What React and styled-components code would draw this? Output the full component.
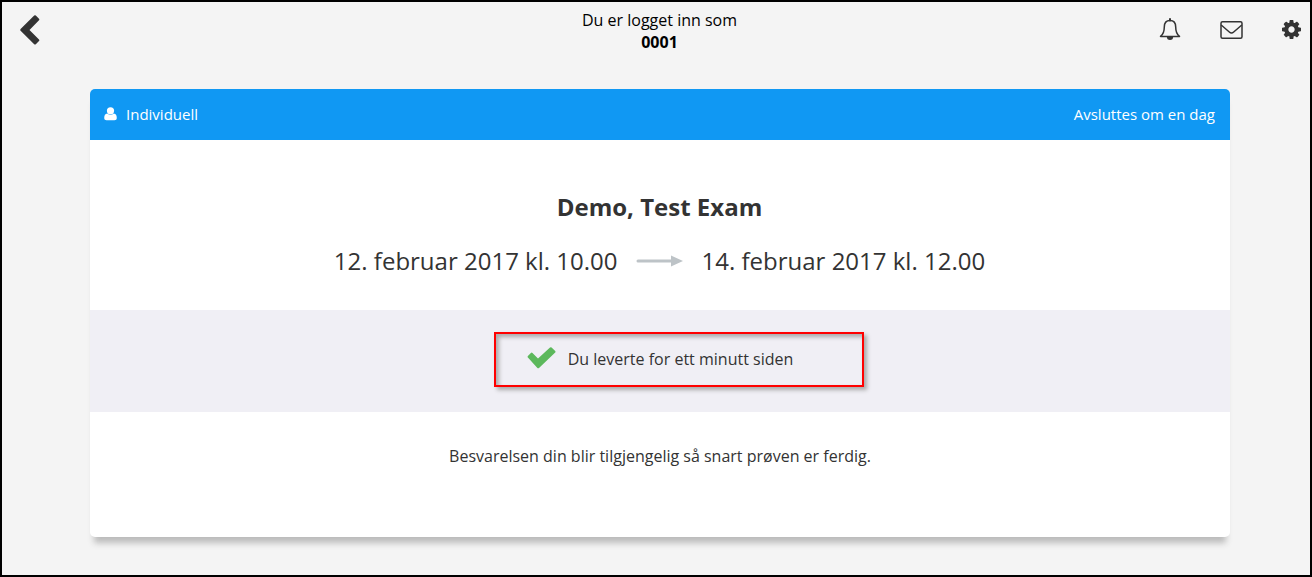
import styled, { createGlobalStyle } from "styled-components";

export default function App() {
    return (
        <Page>
            <GlobalStyle />
            <TopBar>
                <IconButton aria-label="Tilbake">
                    <BackIcon />
                </IconButton>
                <LoginInfo>
                    Du er logget inn som
                    <strong>0001</strong>
                </LoginInfo>
                <Actions>
                    <IconButton aria-label="Varsler">
                        <BellIcon />
                    </IconButton>
                    <IconButton aria-label="Meldinger">
                        <MailIcon />
                    </IconButton>
                    <IconButton aria-label="Innstillinger">
                        <CogIcon />
                    </IconButton>
                </Actions>
            </TopBar>
            <Card>
                <CardHeader>
                    <ExamType>
                        <UserIcon />
                        Individuell
                    </ExamType>
                    <span>Avsluttes om en dag</span>
                </CardHeader>
                <ExamInfo>
                    <Title>Demo, Test Exam</Title>
                    <Period>
                        <time dateTime="2017-02-12T10:00">12. februar 2017 kl. 10.00</time>
                        <ArrowIcon />
                        <time dateTime="2017-02-14T12:00">14. februar 2017 kl. 12.00</time>
                    </Period>
                </ExamInfo>
                <StatusBand>
                    <Status>
                        <CheckIcon />
                        <span>Du leverte for ett minutt siden</span>
                        <Highlight />
                    </Status>
                </StatusBand>
                <Message>Besvarelsen din blir tilgjengelig så snart prøven er ferdig.</Message>
            </Card>
        </Page>
    );
}

function BackIcon() {
    return (
        <svg width="20" height="30" viewBox="0 0 20 30" aria-hidden="true">
            <path
                d="M14.2 .5Q15 -.2 15.8 .5L19 3.7Q19.7 4.5 19 5.3L9.5 14.9L19 24.5Q19.7 25.3 19 26.1L15.8 29.2Q15 29.9 14.2 29.2L.6 15.7Q-.1 14.9 .6 14.1Z"
                fill="#333"
            />
        </svg>
    );
}

function BellIcon() {
    return (
        <svg width="22" height="24" viewBox="0 0 22 24" aria-hidden="true">
            <path
                d="M11 2.500C7 2.500 5.300 5.500 5.300 9C5.300 14 4 16.500 1.500 18.400H20.500C18 16.500 16.700 14 16.700 9C16.700 5.500 15 2.500 11 2.500Z"
                fill="none"
                stroke="#333"
                strokeWidth="1.5"
                strokeLinejoin="round"
            />
            <path d="M11 1V2.500" stroke="#333" strokeWidth="2" strokeLinecap="round" />
            <path d="M7.800 18.500H14.200A3.200 3.600 0 0 1 7.800 18.500Z" fill="#333" />
        </svg>
    );
}

function MailIcon() {
    return (
        <svg width="23" height="20" viewBox="0 0 23 20" aria-hidden="true">
            <g fill="none" stroke="#333" strokeWidth="1.5" strokeLinejoin="round">
                <rect x="1" y="1.8" width="21" height="16.500" rx="1.5" />
                <path d="M1.2 5L9.300 12Q11.500 14 13.700 12L21.800 5" />
            </g>
        </svg>
    );
}

function CogIcon() {
    return (
        <svg width="19" height="20" viewBox="0 168 1536 1536" aria-hidden="true">
            <path
                d="M1024 896q0-106-75-181t-181-75-181 75-75 181 75 181 181 75 181-75 75-181zm512-109v222q0 12-8 23t-20 13l-185 28q-19 54-39 91 35 50 107 138 10 12 10 25t-9 23q-27 37-99 108t-94 71q-12 0-26-9l-138-108q-44 23-91 38-16 136-29 186-7 28-36 28h-222q-14 0-24.500-8.500t-11.500-21.500l-28-184q-49-16-90-37l-141 107q-10 9-25 9-14 0-25-11-126-114-165-168-7-10-7-23 0-12 8-23 15-21 51-66.500t54-70.500q-27-50-41-99l-183-27q-13-2-21-12.500t-8-23.500v-222q0-12 8-23t19-13l186-28q14-46 39-92-40-57-107-138-10-12-10-24 0-10 9-23 26-36 98.500-107.500t94.500-71.500q13 0 26 10l138 107q44-23 91-38 16-136 29-186 7-28 36-28h222q14 0 24.500 8.500t11.500 21.500l28 184q49 16 90 37l142-107q9-9 24-9 13 0 25 10 129 119 165 170 7 8 7 22 0 12-8 23-15 21-51 66.500t-54 70.500q26 50 41 98l183 28q13 2 21 12.500t8 23.500z"
                fill="#333"
            />
        </svg>
    );
}

function UserIcon() {
    return (
        <svg width="13" height="14" viewBox="0 0 13 14" aria-hidden="true">
            <circle cx="6.500" cy="3.800" r="3.600" fill="#fff" />
            <path
                d="M3.200 6.600Q6.500 9.400 9.800 6.600Q12.800 6.900 12.800 11.200Q12.800 13.300 10.500 13.300H2.500Q.2 13.300 .2 11.200Q.2 6.900 3.200 6.600Z"
                fill="#fff"
            />
        </svg>
    );
}

function ArrowIcon() {
    return (
        <svg width="48" height="12" viewBox="0 0 48 12" aria-hidden="true">
            <path d="M2 6H36" stroke="#bdc3c7" strokeWidth="3" strokeLinecap="round" />
            <path d="M35 .5L47 6L35 11.500Z" fill="#bdc3c7" />
        </svg>
    );
}

function CheckIcon() {
    return (
        <svg width="29" height="24" viewBox="0 0 29 24" aria-hidden="true">
            <path
                d="M.9 10.500Q.2 9.700 .9 8.900L3.900 5.900Q4.700 5.200 5.500 5.900L11 11.400L23 .5Q23.800 -.2 24.600 .5L28.200 3.900Q28.900 4.700 28.200 5.500L12 20.900Q11.200 21.600 10.400 20.900Z"
                fill="#5cb85c"
            />
        </svg>
    );
}

const GlobalStyle = createGlobalStyle`
    * {
        box-sizing: border-box;
    }

    body {
        margin: 0;
        background-color: #f4f4f4;
        font-family: "Open Sans", sans-serif;
        font-size: 16px;
        line-height: 22px;
        color: #333;
    }

    svg {
        display: block;
        flex-shrink: 0;
    }
`;

const Page = styled.div`
    min-height: 100vh;
    border: 2px solid #000;
`;

const TopBar = styled.header`
    display: grid;
    grid-template-columns: 1fr auto 1fr;
    align-items: start;
    padding: 7px 9px 0 18px;
`;

const LoginInfo = styled.div`
    display: flex;
    flex-direction: column;
    align-items: center;
    padding-right: 2px;
    color: #000;
`;

const Actions = styled.div`
    display: flex;
    justify-content: flex-end;
    gap: 39px;
`;

const IconButton = styled.button`
    display: flex;
    align-items: center;
    justify-self: start;
    height: 42px;
    padding: 0;
    border: none;
    background: none;
    cursor: pointer;
`;

const Card = styled.main`
    margin: 36px 80px 38px 88px;
    border-radius: 5px;
    background-color: #fff;
    box-shadow: 0 10px 6px -4px #bbb;
    text-align: center;
`;

const CardHeader = styled.div`
    display: flex;
    align-items: center;
    justify-content: space-between;
    height: 51px;
    padding: 0 15px 2px 14px;
    border-radius: 5px 5px 0 0;
    background-color: #1098f3;
    color: #fff;
    font-size: 15px;
`;

const ExamType = styled.div`
    display: flex;
    align-items: center;
    gap: 9px;
`;

const ExamInfo = styled.section`
    display: flex;
    flex-direction: column;
    gap: 22px;
    padding: 51px 17px 33px 16px;
    font-size: 24px;
    line-height: 32px;
`;

const Title = styled.h1`
    margin: 0;
    font-size: 24px;
    font-weight: 700;
`;

const Period = styled.div`
    display: flex;
    align-items: center;
    justify-content: center;
    gap: 18px;
`;

const StatusBand = styled.section`
    display: flex;
    justify-content: center;
    padding: 37px 16px 41px;
    background-color: #f0eff5;
`;

const Status = styled.div`
    position: relative;
    display: flex;
    align-items: center;
    gap: 12px;
`;

const Highlight = styled.div`
    position: absolute;
    top: -15px;
    right: -71px;
    bottom: -16px;
    left: -33px;
    border: 2px solid #f00;
    box-shadow: 3px 3px 4px #aaa, inset 3px 3px 4px #aaa;
    pointer-events: none;
`;

const Message = styled.p`
    margin: 0;
    padding: 33px 16px 70px;
`;
